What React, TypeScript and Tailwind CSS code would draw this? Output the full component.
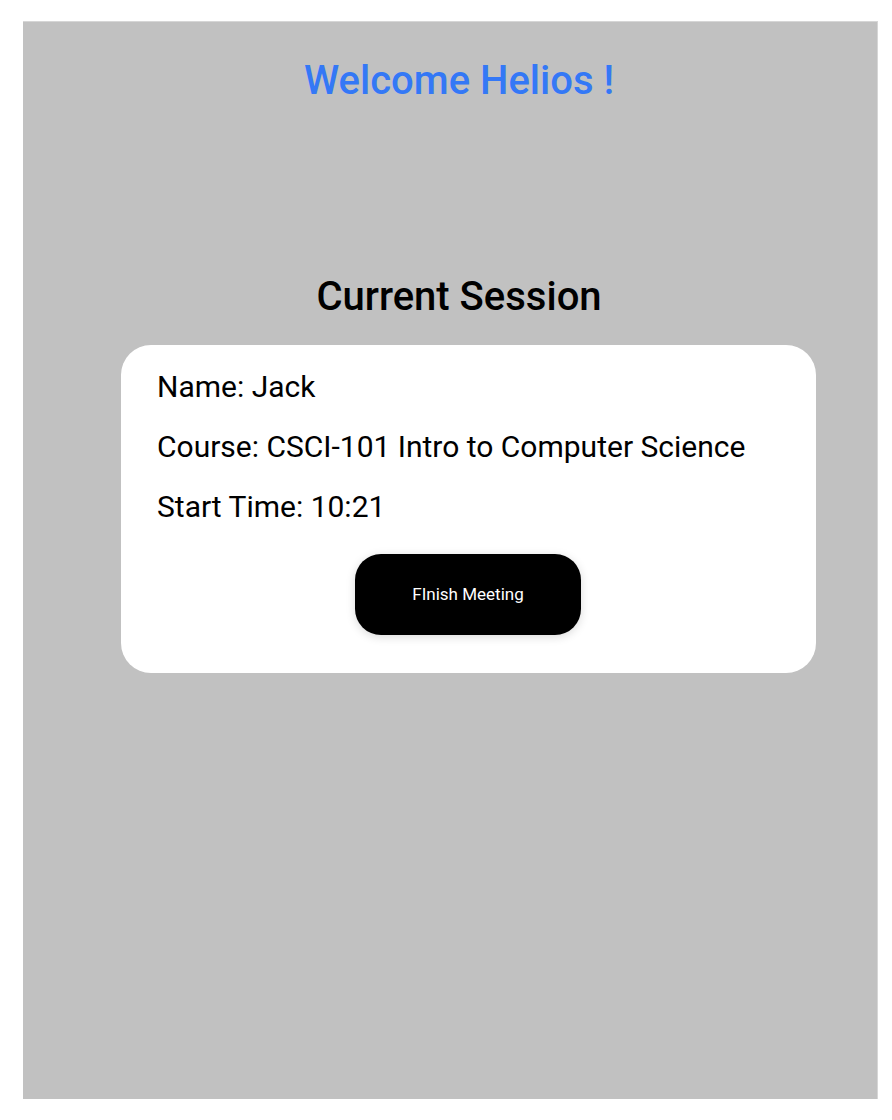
import React from 'react';

const session = {
  name: 'Jack',
  course: 'CSCI-101 Intro to Computer Science',
  startTime: '10:21',
};

export default function App() {
  return (
    <div className="min-h-screen bg-white pt-[21px] pl-[23px] font-['Roboto',sans-serif]">
      <div className="flex h-[1078px] w-[855px] flex-col border-t border-r border-[#d6d6d6] bg-[#c1c1c1]">
        <h1 className="mt-[35px] pl-[18px] text-center text-[40px] leading-[48px] font-medium text-[#3478f6]">
          Welcome Helios !
        </h1>

        <h2 className="mt-[168px] pl-[18px] text-center text-[40px] leading-[48px] font-medium text-black">
          Current Session
        </h2>

        <div className="mt-[24px] ml-[98px] w-[695px] rounded-[30px] bg-white pt-[12px] pb-[38px] pl-[36px]">
          <p className="text-[30px] leading-[60px] text-black">Name: {session.name}</p>
          <p className="text-[30px] leading-[60px] text-black">Course: {session.course}</p>
          <p className="text-[30px] leading-[60px] text-black">Start Time: {session.startTime}</p>
          <div className="mt-[17px] flex justify-center pr-[37px]">
            <button className="h-[81px] w-[226px] rounded-[26px] bg-black text-[17px] text-white shadow-[0_2px_10px_rgba(0,0,0,0.15)]">
              FInish Meeting
            </button>
          </div>
        </div>
      </div>
    </div>
  );
}
